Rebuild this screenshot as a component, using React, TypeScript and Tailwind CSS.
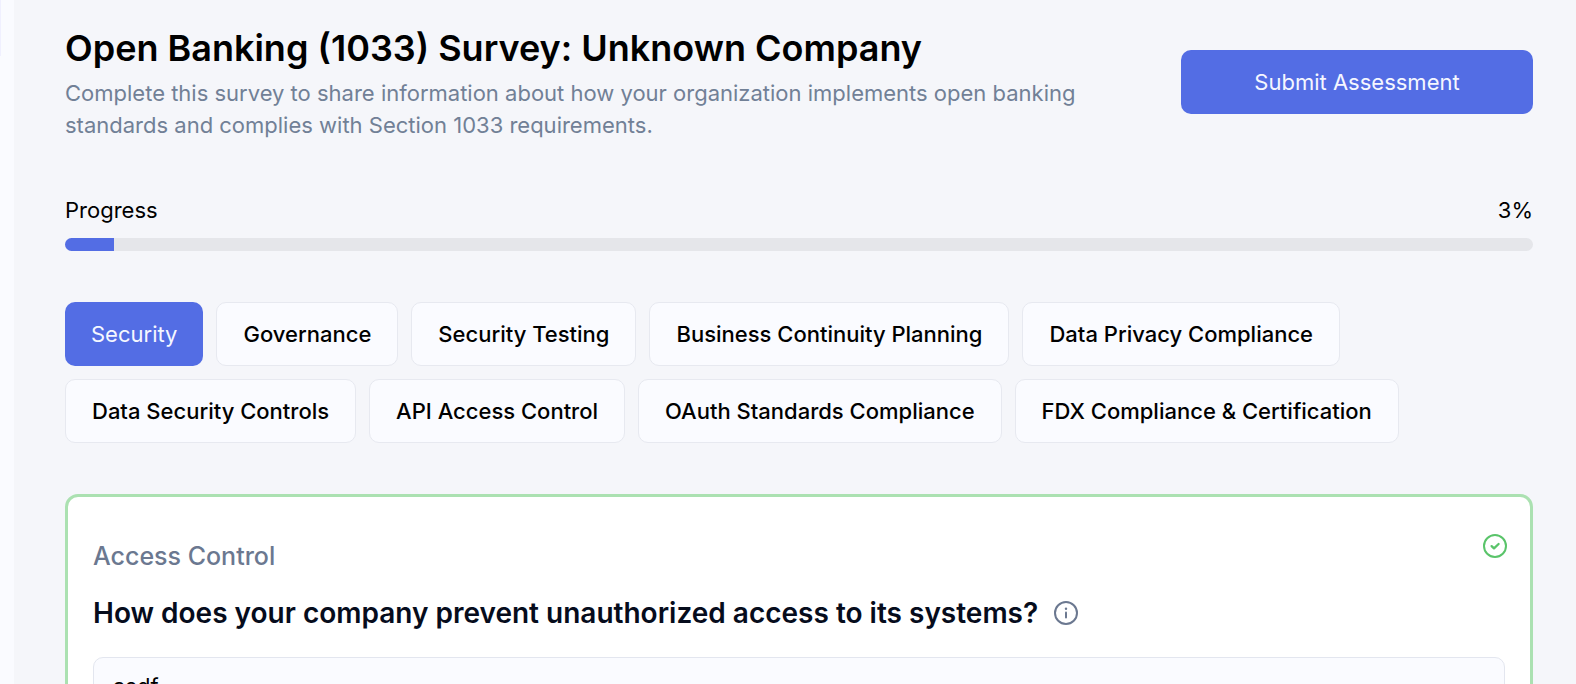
import { useState } from "react";

const sections = [
  "Security",
  "Governance",
  "Security Testing",
  "Business Continuity Planning",
  "Data Privacy Compliance",
  "Data Security Controls",
  "API Access Control",
  "OAuth Standards Compliance",
  "FDX Compliance & Certification",
];

function InfoIcon() {
  return (
    <svg viewBox="0 0 24 24" className="size-6" fill="none" stroke="currentColor" strokeLinecap="round" aria-hidden="true">
      <circle cx="12" cy="12" r="11" strokeWidth="2" />
      <path d="M12 11.5v5" strokeWidth="2" />
      <circle cx="12" cy="7.8" r="1.2" fill="currentColor" stroke="none" />
    </svg>
  );
}

function CheckIcon() {
  return (
    <svg viewBox="0 0 24 24" className="size-6" fill="none" stroke="currentColor" strokeWidth="2" strokeLinecap="round" strokeLinejoin="round" role="img" aria-label="Answered">
      <circle cx="12" cy="12" r="11" />
      <path d="M8.6 12.1l2.4 2.3 4.6-4.4" strokeWidth="2.3" />
    </svg>
  );
}

export default function App() {
  const [active, setActive] = useState("Security");
  const [answer, setAnswer] = useState("asdf");
  const progress = 3;

  return (
    <div className="flex min-h-screen bg-[#f5f6fa] font-[Inter,sans-serif] text-[22px] leading-8 text-black antialiased">
      <aside className="w-[14px] shrink-0 bg-[#fafbff]">
        <div className="h-14 w-px bg-[#f0f0ff]" />
      </aside>
      <main className="min-w-0 grow pt-[23px] pr-[43px] pb-12 pl-[51px]">
        <header className="flex items-center justify-between gap-12">
          <div className="max-w-[1020px]">
            <h1 className="mb-1 text-[36px] leading-[50px] font-semibold">
              Open Banking (1033) Survey: Unknown Company
            </h1>
            <p className="text-[#718096]">
              Complete this survey to share information about how your organization implements open banking standards and complies with Section 1033 requirements.
            </p>
          </div>
          <button type="button" className="h-16 w-[352px] shrink-0 rounded-[10px] bg-[#536de4] text-[#f5f7ff]">
            Submit Assessment
          </button>
        </header>

        <div className="mt-[53px]">
          <div className="flex justify-between">
            <span id="progress-label">Progress</span>
            <span>{progress}%</span>
          </div>
          <div role="progressbar" aria-labelledby="progress-label" aria-valuenow={progress} className="mt-3 h-[13px] overflow-hidden rounded-full bg-[#e5e6ea]">
            <div className="h-full w-[49px] bg-[#536de4]" />
          </div>
        </div>

        <nav className="mt-[51px] flex max-w-[1400px] flex-wrap gap-[13px]">
          {sections.map((name) => (
            <button
              key={name}
              type="button"
              onClick={() => setActive(name)}
              className={
                name === active
                  ? "h-16 rounded-[10px] bg-[#536de4] px-[26px] text-[#f5f7ff]"
                  : "h-16 rounded-[10px] border border-[#e7e9f0] bg-[#fafbff] px-[26px] font-medium"
              }
            >
              {name}
            </button>
          ))}
        </nav>

        <section className="relative mt-[51px] rounded-[13px] border-3 border-[#abe1b1] bg-white px-[25px] pt-[41px] pb-8">
          <span className="absolute top-[37px] right-[23px] text-[#5ac46a]">
            <CheckIcon />
          </span>
          <h2 className="text-[25px] leading-9 font-medium text-[#6b7890]">Access Control</h2>
          <div className="mt-[21px] flex items-center gap-4">
            <label htmlFor="answer" className="text-[28px] leading-9 font-semibold text-[#060c1c]">
              How does your company prevent unauthorized access to its systems?
            </label>
            <button type="button" aria-label="More information" className="text-[#6b7890]">
              <InfoIcon />
            </button>
          </div>
          <textarea
            id="answer"
            value={answer}
            onChange={(e) => setAnswer(e.target.value)}
            className="mt-[26px] block h-32 w-full resize-none rounded-[10px] border border-[#e3e6ef] bg-[#fafbff] px-[19px] py-3"
          />
        </section>
      </main>
    </div>
  );
}
